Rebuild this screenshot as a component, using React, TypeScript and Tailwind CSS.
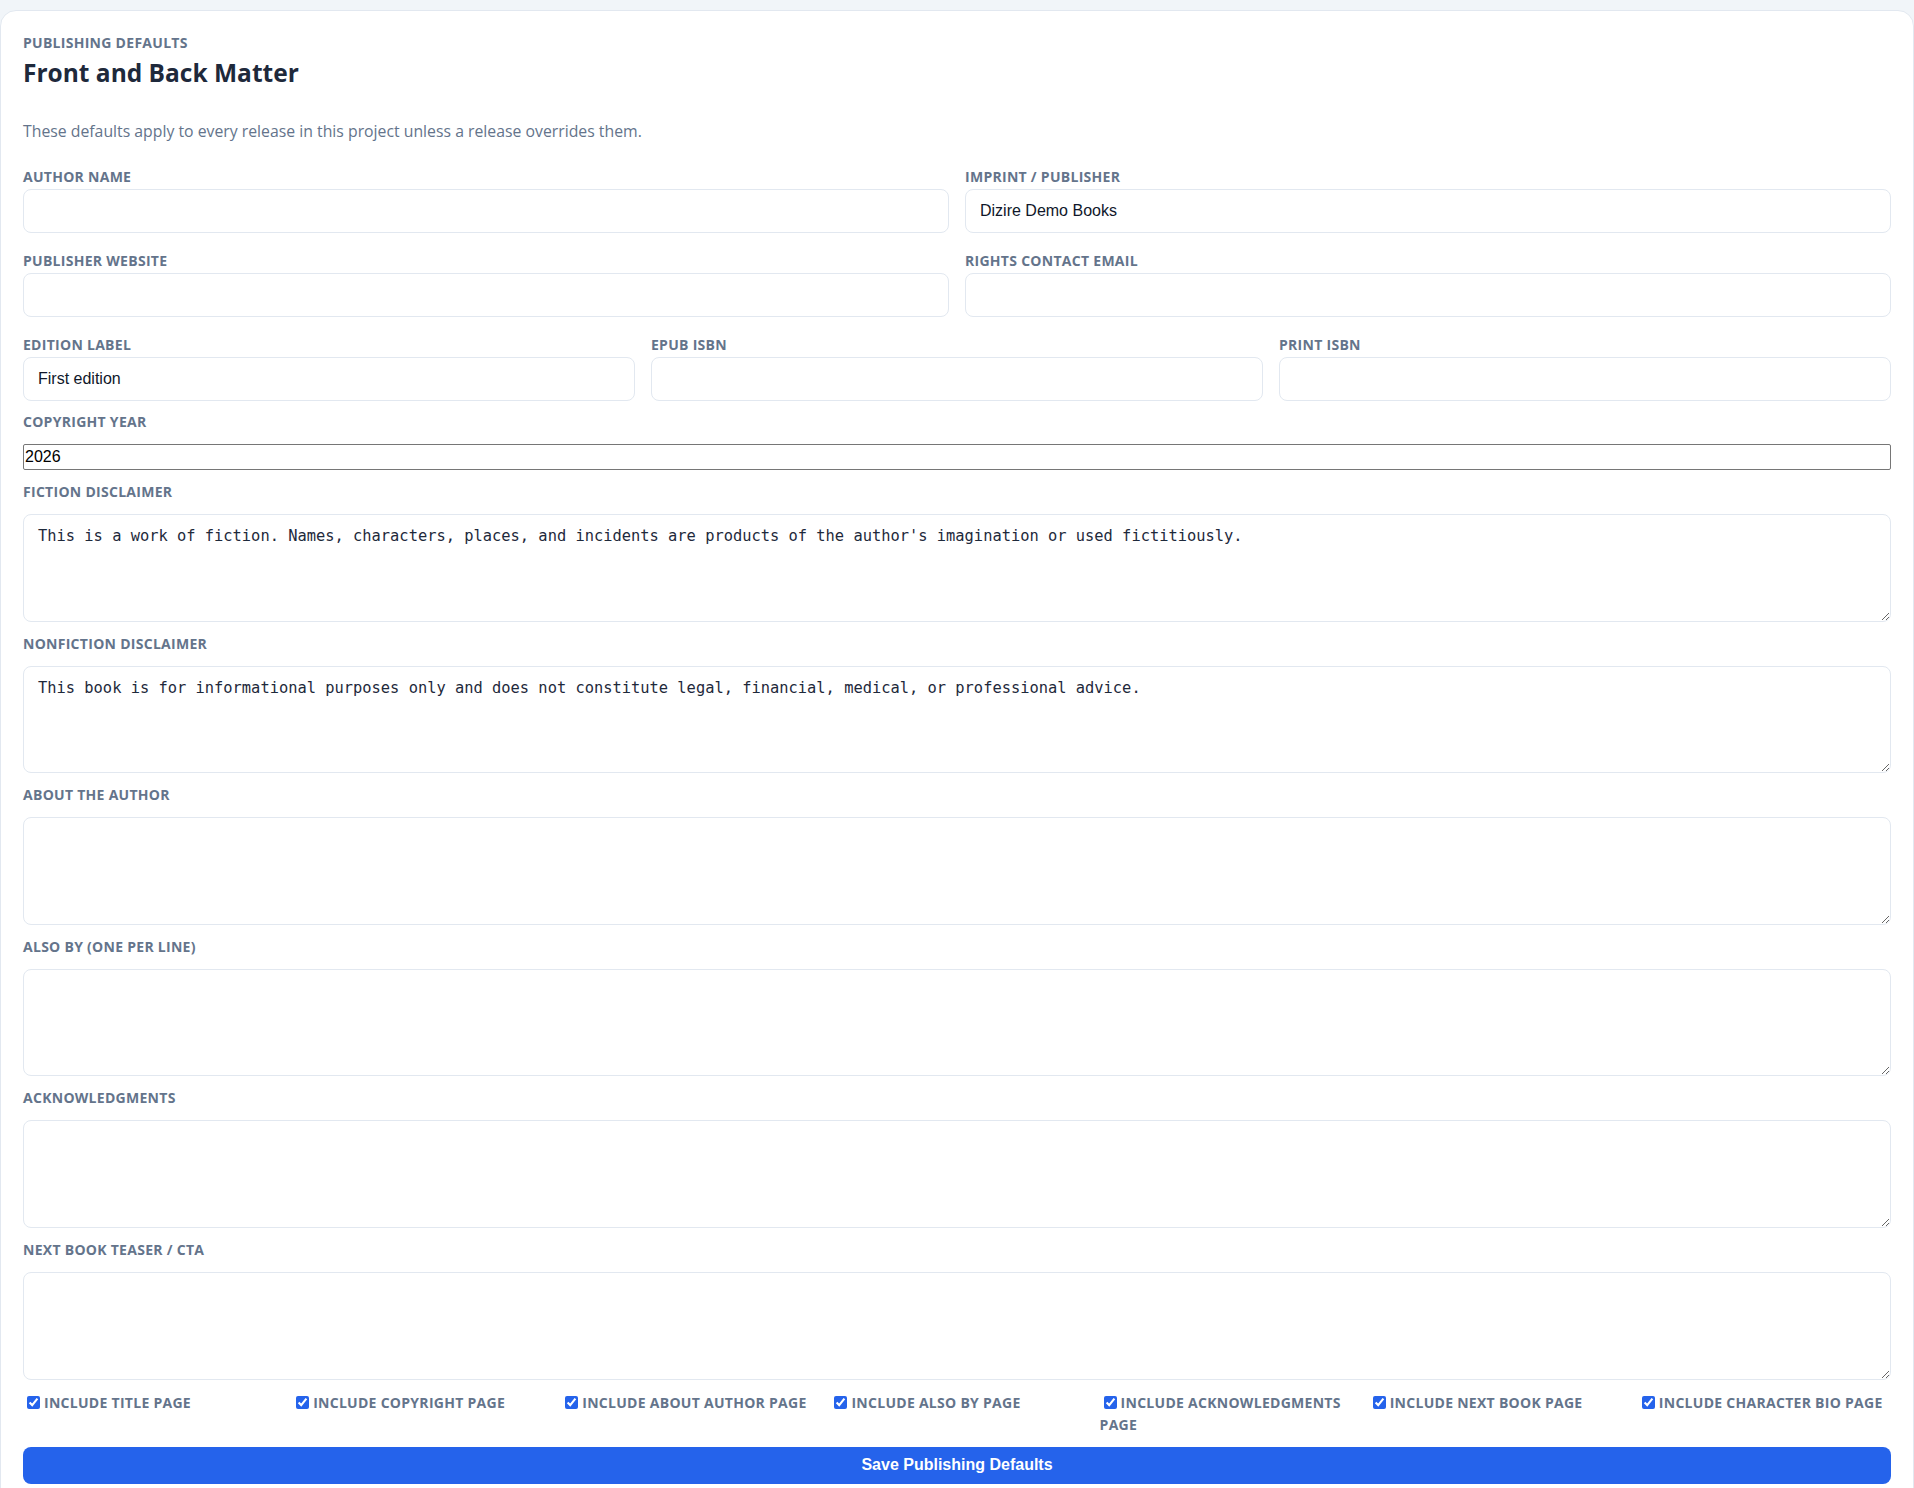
import { useState } from "react";

const labelCls =
  "block text-[14px] leading-4 font-bold uppercase tracking-[0.02em] text-[#64748b]";
const inputCls =
  "h-11 w-full rounded-lg border border-[#e2e8f0] bg-white px-[14px] text-base text-[#0f172a] outline-none";
const areaCls =
  "h-[107.6px] w-full rounded-lg border border-[#e2e8f0] bg-white px-[14px] py-3 text-[15.4px] leading-[1.25] text-[#1e293b] outline-none";

function TextField({ label, value }: { label: string; value?: string }) {
  const [v, setV] = useState(value ?? "");
  return (
    <label className="flex flex-col">
      <span className={`${labelCls} mb-1`}>{label}</span>
      <input
        type="text"
        value={v}
        onChange={(e) => setV(e.target.value)}
        className={inputCls}
        style={{ fontFamily: '"Liberation Sans", Arial, sans-serif' }}
      />
    </label>
  );
}

function AreaField({ label, value }: { label: string; value?: string }) {
  const [v, setV] = useState(value ?? "");
  return (
    <>
      <span className={labelCls}>{label}</span>
      <textarea
        value={v}
        onChange={(e) => setV(e.target.value)}
        className={areaCls}
        style={{ fontFamily: '"DejaVu Sans Mono", "Liberation Mono", monospace' }}
      />
    </>
  );
}

const toggles = [
  "Include title page",
  "Include copyright page",
  "Include about author page",
  "Include also by page",
  "Include acknowledgments page",
  "Include next book page",
  "Include character bio page",
];

export default function App() {
  const [year, setYear] = useState("2026");
  const [checked, setChecked] = useState<boolean[]>(toggles.map(() => true));

  return (
    <div
      className="min-h-screen bg-[#f1f5f9] pt-[10px]"
      style={{ fontFamily: '"Open Sans", "Noto Sans", sans-serif' }}
    >
      <section className="rounded-t-2xl border border-[#e2e8f0] bg-white px-[22px] pt-6 pb-6">
        {/* Header */}
        <p className="text-[14px] leading-4 font-bold uppercase tracking-[0.02em] text-[#64748b]">
          Publishing defaults
        </p>
        <h2 className="mt-[6px] text-[24.5px] leading-8 font-bold text-[#1e293b]">Front and Back Matter</h2>
        <p className="mt-[30px] text-[15.8px] leading-6 text-[#64748b]">
          These defaults apply to every release in this project unless a release overrides them.
        </p>

        {/* Short fields */}
        <div className="mt-[26px] flex flex-col gap-5">
          <div className="grid grid-cols-2 gap-x-4">
            <TextField label="Author name" />
            <TextField label="Imprint / Publisher" value="Dizire Demo Books" />
          </div>
          <div className="grid grid-cols-2 gap-x-4">
            <TextField label="Publisher website" />
            <TextField label="Rights contact email" />
          </div>
          <div className="grid grid-cols-3 gap-x-4">
            <TextField label="Edition label" value="First edition" />
            <TextField label="EPUB ISBN" />
            <TextField label="Print ISBN" />
          </div>
        </div>

        {/* Long fields */}
        <div className="mt-[13px] flex flex-col gap-[14px]">
          <span className={labelCls}>Copyright year</span>
          <input
            type="text"
            value={year}
            onChange={(e) => setYear(e.target.value)}
            className="h-[26px] w-full rounded-[2px] border border-[#767676] px-[1px] text-base text-black"
            style={{ fontFamily: '"Liberation Sans", Arial, sans-serif' }}
          />
          <AreaField
            label="Fiction disclaimer"
            value="This is a work of fiction. Names, characters, places, and incidents are products of the author's imagination or used fictitiously."
          />
          <AreaField
            label="Nonfiction disclaimer"
            value="This book is for informational purposes only and does not constitute legal, financial, medical, or professional advice."
          />
          <AreaField label="About the author" />
          <AreaField label="Also by (one per line)" />
          <AreaField label="Acknowledgments" />
          <AreaField label="Next book teaser / CTA" />
        </div>

        {/* Toggles */}
        <div className="mt-3 grid grid-cols-7 gap-x-4">
          {toggles.map((t, i) => (
            <label
              key={t}
              className="block text-[14px] leading-[22px] font-bold uppercase tracking-[0.02em] text-[#64748b]"
            >
              <input
                type="checkbox"
                checked={checked[i]}
                onChange={() => setChecked((c) => c.map((x, j) => (j === i ? !x : x)))}
                className="ml-1 mr-1 align-[-1px] accent-[#2563eb]"
              />
              {t}
            </label>
          ))}
        </div>

        <button
          type="button"
          className="mt-[11px] h-[37px] w-full rounded-lg bg-[#2563eb] text-base font-bold text-white"
          style={{ fontFamily: '"Liberation Sans", Arial, sans-serif' }}
        >
          Save Publishing Defaults
        </button>
      </section>
    </div>
  );
}
